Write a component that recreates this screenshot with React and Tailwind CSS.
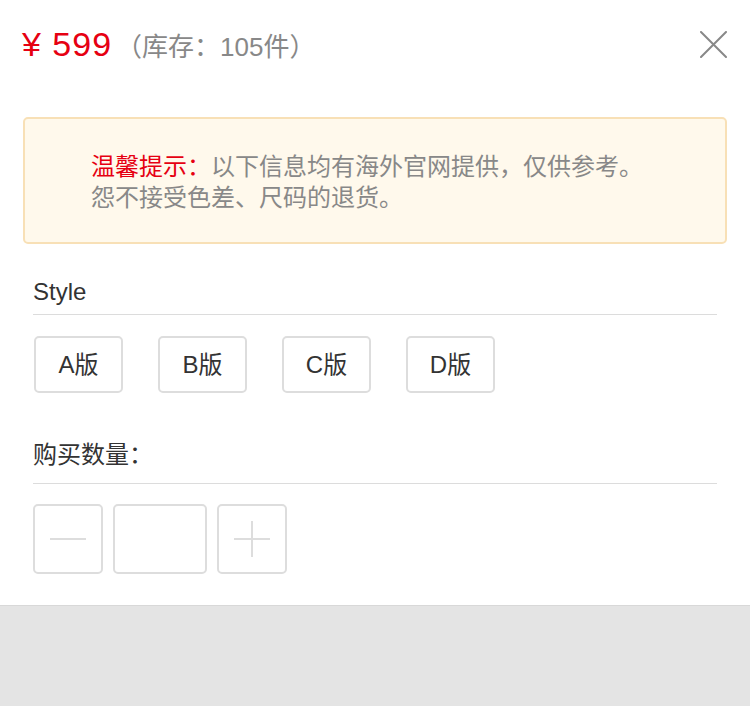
export default function App() {
  const font = { fontFamily: '"Liberation Sans", "Noto Sans CJK SC", sans-serif' };
  return (
    <div className="w-[750px] h-[706px] flex flex-col bg-white" style={font}>
      <div className="flex-1 flex flex-col">
        <div className="h-[88px] flex items-center justify-between pl-[22px] pr-[23px]">
          <div className="flex items-baseline">
            <span className="text-[34px] tracking-[1px] text-[#e60012] leading-none">¥ 599</span>
            <span className="text-[26px] text-[#888888] leading-none ml-[4px]">（库存：105件）</span>
          </div>
          <svg width="27" height="27" viewBox="0 0 27 27" className="shrink-0">
            <path d="M1 1 L26 26 M26 1 L1 26" stroke="#888888" strokeWidth="2" strokeLinecap="round" />
          </svg>
        </div>
        <div className="mx-[23px] mt-[29px] h-[127px] border-2 border-[#f8e0b6] bg-[#fff9ec] rounded-[5px] flex flex-col justify-center pl-[66px] pt-[2px] text-[24px] leading-[31px] text-[#888888]">
          <div>
            <span className="text-[#e60012]">温馨提示：</span>以下信息均有海外官网提供，仅供参考。
          </div>
          <div>怨不接受色差、尺码的退货。</div>
        </div>
        <div className="mx-[33px] mt-[27px]">
          <div className="h-[44px] flex items-center border-b border-[#dcdcdc] text-[24px] text-[#333333] pb-[2px]">Style</div>
          <div className="flex gap-[35px] mt-[21px] ml-[1px]">
            {["A版", "B版", "C版", "D版"].map((t) => (
              <div key={t} className="w-[89px] h-[57px] border-2 border-[#dddddd] rounded-[5px] flex items-center justify-center text-[24px] text-[#333333]">
                {t}
              </div>
            ))}
          </div>
          <div className="h-[48px] mt-[43px] flex items-center border-b border-[#dcdcdc] text-[24px] text-[#333333] pb-[10px]">购买数量：</div>
          <div className="flex gap-[10px] mt-[20px]">
            <div className="w-[70px] h-[70px] border-2 border-[#dddddd] rounded-[5px] flex items-center justify-center">
              <div className="w-[36px] h-[2px] bg-[#dddddd]" />
            </div>
            <div className="w-[94px] h-[70px] border-2 border-[#dddddd] rounded-[5px]" />
            <div className="w-[70px] h-[70px] border-2 border-[#dddddd] rounded-[5px] flex items-center justify-center relative">
              <div className="w-[36px] h-[2px] bg-[#dddddd]" />
              <div className="absolute w-[2px] h-[36px] bg-[#dddddd]" />
            </div>
          </div>
        </div>
      </div>
      <div className="h-[101px] bg-[#e4e4e4] border-t border-[#d8d8d8]" />
    </div>
  );
}
